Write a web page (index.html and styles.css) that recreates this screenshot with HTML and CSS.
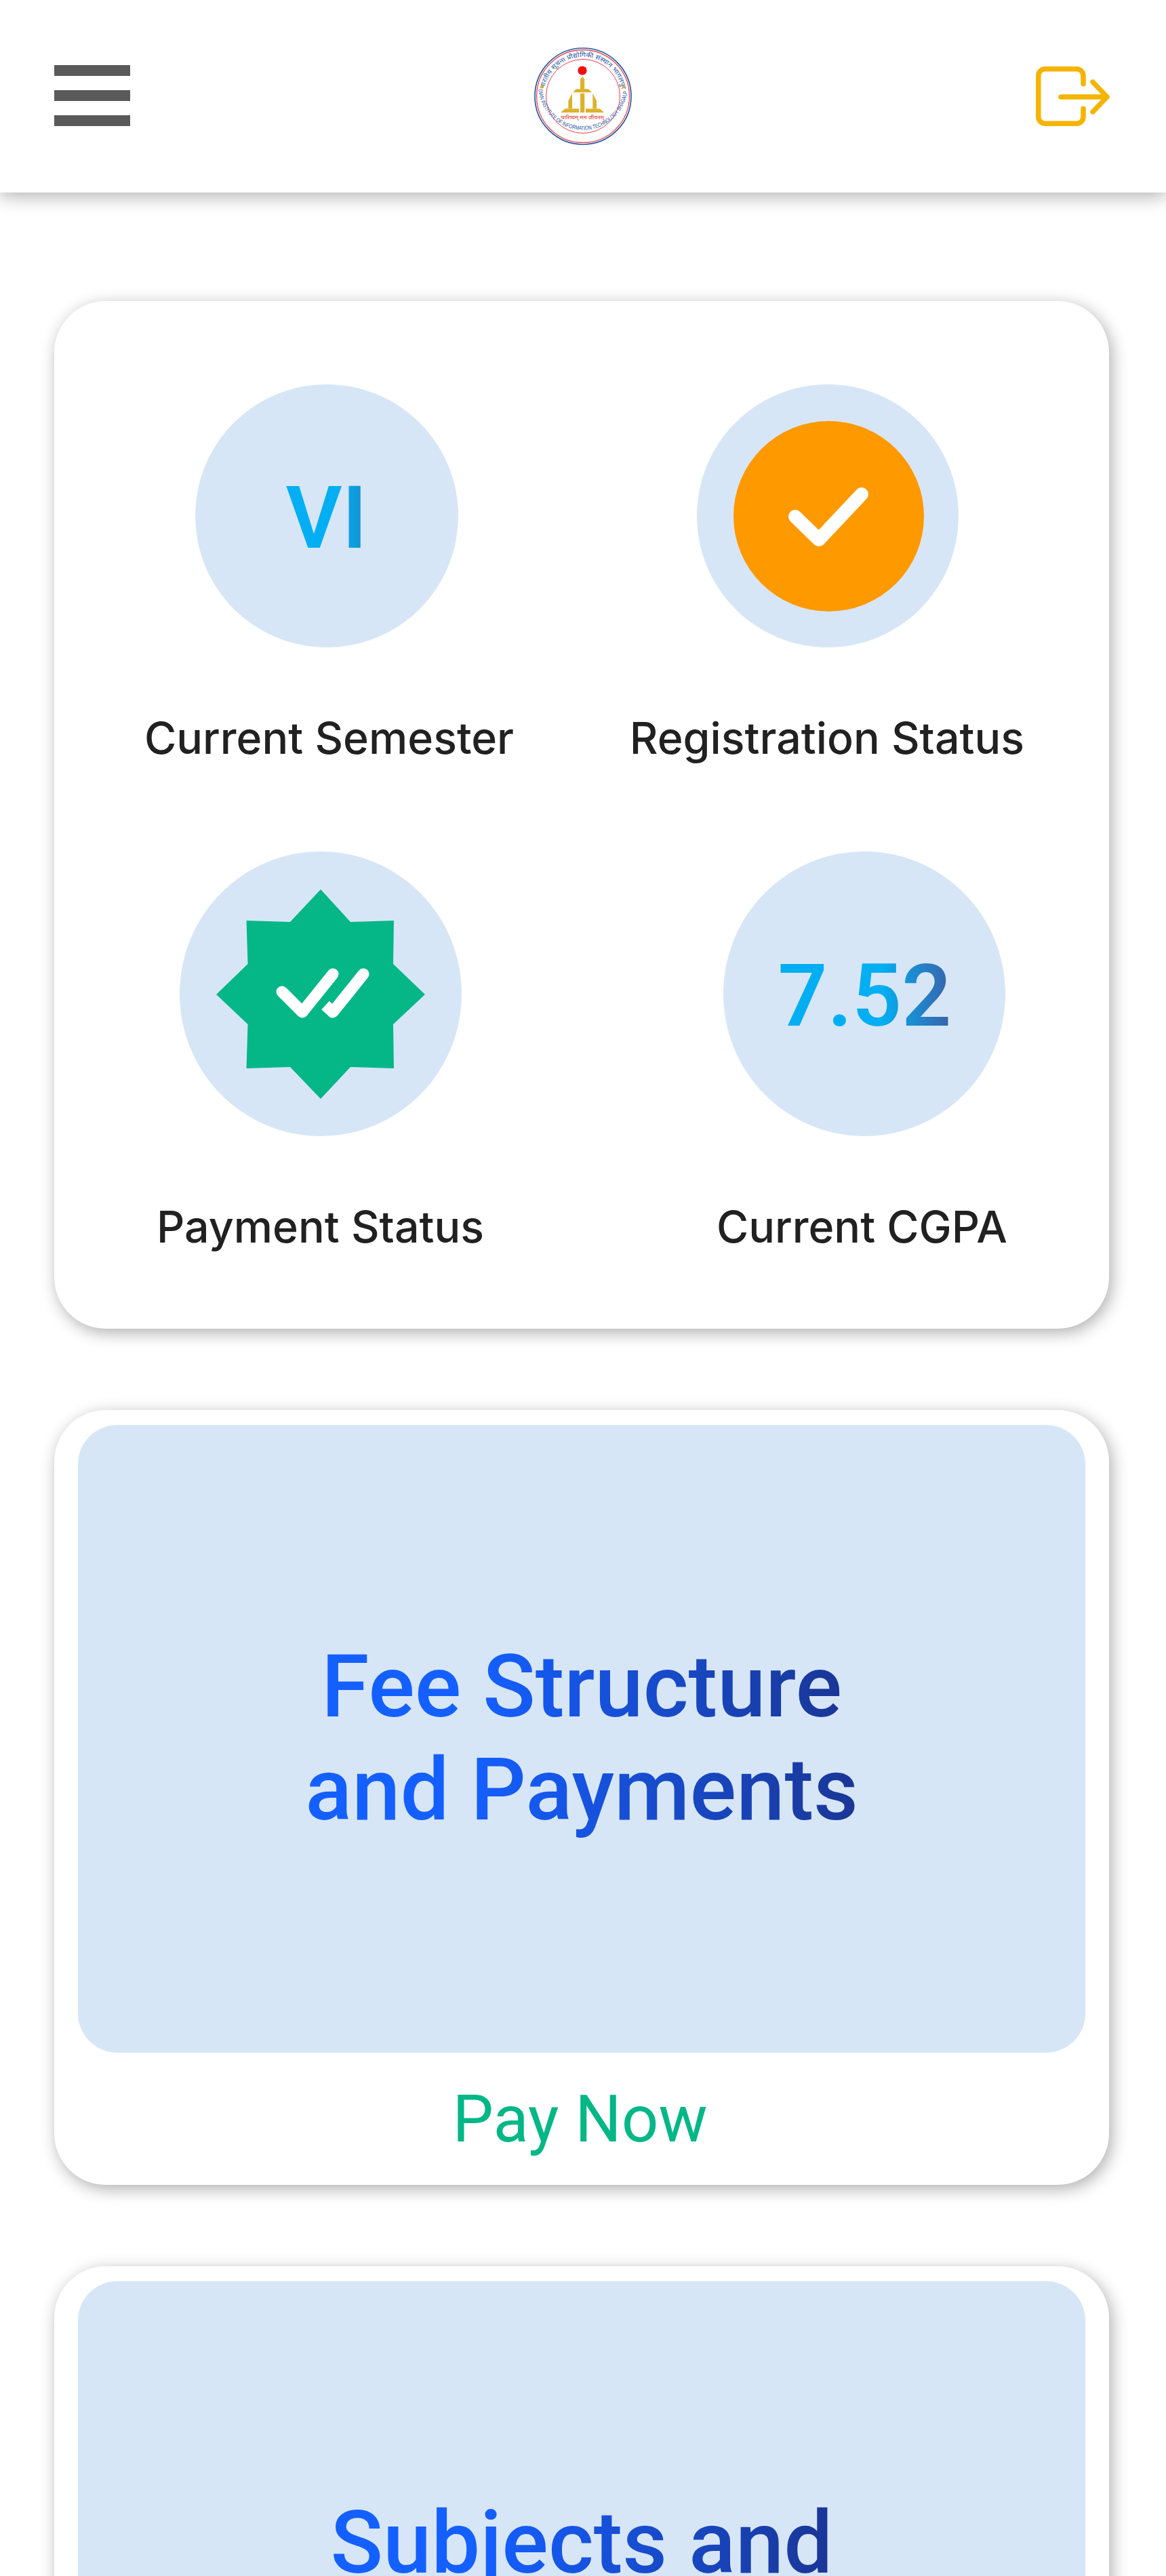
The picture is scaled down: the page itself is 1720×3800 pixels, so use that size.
FILE: index.html
```html
<!DOCTYPE html>
<html lang="en">
<head>
    <meta charset="UTF-8">
    <meta name="viewport" content="width=device-width, initial-scale=1.0">
    <title>Student Dashboard</title>
    <link rel="stylesheet" href="styles.css">
</head>
<body>
    <header class="topbar">
        <div class="menu-btn"><span></span><span></span><span></span></div>
        <svg class="logo" viewBox="0 0 144 144">
            <defs>
                <path id="arcTop" d="M 14 72 A 58 58 0 0 1 130 72"/>
                <path id="arcBottom" d="M 6.5 64 A 66 66 0 0 0 137.500 64"/>
            </defs>
            <circle cx="72" cy="72" r="71" fill="#fff" stroke="#1f5aa8" stroke-width="1.700"/>
            <circle cx="72" cy="72" r="68.400" fill="none" stroke="#f0262c" stroke-width="1.100"/>
            <circle cx="72" cy="72" r="54.500" fill="none" stroke="#f0262c" stroke-width="0.900"/>
            <text class="logo-text logo-text-hi"><textPath href="#arcTop" startOffset="50%" text-anchor="middle" textLength="162" lengthAdjust="spacingAndGlyphs">भारतीय सूचना प्रौद्योगिकी संस्थान भागलपुर</textPath></text>
            <text class="logo-text"><textPath href="#arcBottom" startOffset="50%" text-anchor="middle" textLength="208" lengthAdjust="spacingAndGlyphs">INDIAN INSTITUTE OF INFORMATION TECHNOLOGY BHAGALPUR</textPath></text>
            <circle cx="11.500" cy="58" r="2.400" fill="#dcb22c"/>
            <circle cx="132" cy="58" r="2.400" fill="#dcb22c"/>
            <circle cx="71" cy="34" r="6.600" fill="#f50d0d"/>
            <path d="M68 47l3-4.500 3.200 4.500v14.300H68zM62 61.300h18l5 5H57zM68 67.700h6.300V96H68zM56 67.700v22.300h-5.700V78.700zM86.300 67.700v22.300H92V78.700zM45.300 90.300H66V96H39.300zM97 90.300H76V96h27z" fill="#dcb22c"/>
            <text class="logo-motto" x="71" y="106" text-anchor="middle">चारित्र्यम् मम जीवनम्</text>
        </svg>
        <svg class="logout" viewBox="0 0 110 88" fill="none" stroke="#f5b400" stroke-width="7.500" stroke-linecap="round" stroke-linejoin="round">
            <path d="M70 25.700V13.750a10 10 0 0 0-10-10H13.750a10 10 0 0 0-10 10v60.500a10 10 0 0 0 10 10H60a10 10 0 0 0 10-10V62.300"/>
            <path d="M37 45h68M84 23l21 22-21 22"/>
        </svg>
    </header>

    <main class="content">
        <section class="card stats">
            <div class="stat-row stat-row-top">
                <div class="stat">
                    <div class="circle circle-sem"><span class="grad-num grad-short">VI</span></div>
                    <p class="stat-label">Current Semester</p>
                </div>
                <div class="stat">
                    <div class="circle circle-reg">
                        <div class="orange-dot">
                            <svg viewBox="0 0 120 90" fill="none" stroke="#fff" stroke-width="20" stroke-linecap="round" stroke-linejoin="round"><path d="M10 46l35 34 63-67"/></svg>
                        </div>
                    </div>
                    <p class="stat-label">Registration Status</p>
                </div>
            </div>
            <div class="stat-row stat-row-bottom">
                <div class="stat">
                    <div class="circle">
                        <svg class="badge" viewBox="0 0 308 309">
                            <path fill="#05b787" d="M154 0L198 48 262 46 261 110 308 155 261 199 262 264 198 262 154 309 109 262 44.500 264 46.500 199 0 155 46.500 110 44.500 46 109 48z"/>
                            <g fill="none" stroke="#fff" stroke-width="17" stroke-linecap="round" stroke-linejoin="round">
                                <path d="M97 151l30 30 45-56"/>
                                <path d="M172 181l45-56"/>
                            </g>
                            <path fill="none" stroke="#fff" stroke-width="17" d="M161 171l11 10"/>
                        </svg>
                    </div>
                    <p class="stat-label">Payment Status</p>
                </div>
                <div class="stat">
                    <div class="circle circle-cgpa"><span class="grad-num">7.52</span></div>
                    <p class="stat-label">Current CGPA</p>
                </div>
            </div>
        </section>

        <section class="card action">
            <div class="banner">
                <h2 class="banner-title"><span>Fee Structure</span><br><span>and Payments</span></h2>
            </div>
            <p class="action-link">Pay Now</p>
        </section>

        <section class="card action">
            <div class="banner">
                <h2 class="banner-title"><span>Subjects and</span></h2>
            </div>
        </section>
    </main>
</body>
</html>
```

FILE: styles.css
```css
html, body {
    margin: 0;
    height: 3800px;
    overflow: hidden;
    background: #fff;
}
body {
    font-family: Inter, "Noto Sans", sans-serif;
    color: #212121;
}
.topbar {
    height: 284px;
    padding: 0 82px 0 80px;
    box-sizing: border-box;
    display: flex;
    align-items: center;
    justify-content: space-between;
    background: #fff;
    box-shadow: 0 5px 26px rgba(0,0,0,0.32);
}
.menu-btn {
    width: 112px;
    height: 90px;
    margin-bottom: 2px;
    display: flex;
    flex-direction: column;
    justify-content: space-between;
}
.menu-btn span {
    height: 16px;
    background: #5a5a5a;
}
.logo {
    width: 144px;
    height: 144px;
}
.logo-text {
    font-family: "Liberation Sans", "Noto Sans", sans-serif;
    font-size: 8.5px;
    fill: #1f5aa8;
}
.logo-text-hi {
    font-size: 9.5px;
}
.logo-motto {
    font-family: "Noto Sans", sans-serif;
    font-size: 8.5px;
    fill: #e8302c;
}
.logout {
    width: 110px;
    height: 88px;
}
.content {
    padding: 160px 84px 0 80px;
    display: flex;
    flex-direction: column;
    gap: 120px;
}
.card {
    background: #fff;
    border-radius: 76px;
    box-shadow: 4px 6px 24px rgba(0,0,0,0.32);
}
.stats {
    height: 1516px;
    box-sizing: border-box;
}
.stat-row {
    display: flex;
    justify-content: space-between;
    box-sizing: border-box;
}
.stat-row-top {
    height: 812px;
    padding: 123px 125px 0 133px;
}
.stat-row-bottom {
    padding: 0 150px 0 151px;
}
.stat {
    display: flex;
    flex-direction: column;
    align-items: center;
}
.circle {
    border-radius: 50%;
    background: #d7e6f6;
    display: flex;
    align-items: center;
    justify-content: center;
}
.stat-label {
    margin: 0;
    font-size: 64.5px;
    font-weight: 450;
    line-height: 80px;
    white-space: nowrap;
}
.stat-row-top .circle {
    width: 386px;
    height: 388px;
    margin-bottom: 94px;
}
.stat-row-top .circle-sem {
    width: 388px;
    margin-right: 8px;
}
.stat-row-top .circle-reg {
    margin-left: 2px;
}
.stat-row-bottom .circle {
    width: 416px;
    height: 420px;
    margin-bottom: 94px;
}
.stat-row-bottom .circle-cgpa {
    margin-left: 8px;
}
.grad-num {
    margin-top: 5px;
    font-family: Roboto, sans-serif;
    font-size: 128px;
    font-weight: 600;
    line-height: 1;
    background: linear-gradient(90deg, #03aff2 60%, #3a62aa 100%);
    -webkit-background-clip: text;
    background-clip: text;
    color: transparent;
}
.grad-short {
    background-image: linear-gradient(90deg, #03aff2 65%, #1a8ccc 100%);
}
.orange-dot {
    width: 281px;
    height: 281px;
    margin-left: 4px;
    border-radius: 50%;
    background: #ff9900;
    display: flex;
    align-items: center;
    justify-content: center;
}
.orange-dot svg {
    width: 120px;
    height: 90px;
}
.badge {
    width: 308px;
    height: 309px;
}
.action {
    padding: 22px 35px 0;
    height: 1143px;
    box-sizing: border-box;
}
.banner {
    height: 926px;
    padding-top: 310px;
    box-sizing: border-box;
    border-radius: 58px;
    background: #d7e6f6;
    text-align: center;
}
.banner-title {
    margin: 0;
    font-family: Roboto, sans-serif;
    font-size: 128px;
    font-weight: 500;
    line-height: 152px;
}
.banner-title span {
    background: linear-gradient(90deg, #145fff 30%, #1a3696 100%);
    -webkit-background-clip: text;
    background-clip: text;
    color: transparent;
}
.action-link {
    margin: 41px 5px 0 0;
    text-align: center;
    font-family: Roboto, sans-serif;
    font-size: 96px;
    line-height: 114px;
    color: #05b787;
}
```
